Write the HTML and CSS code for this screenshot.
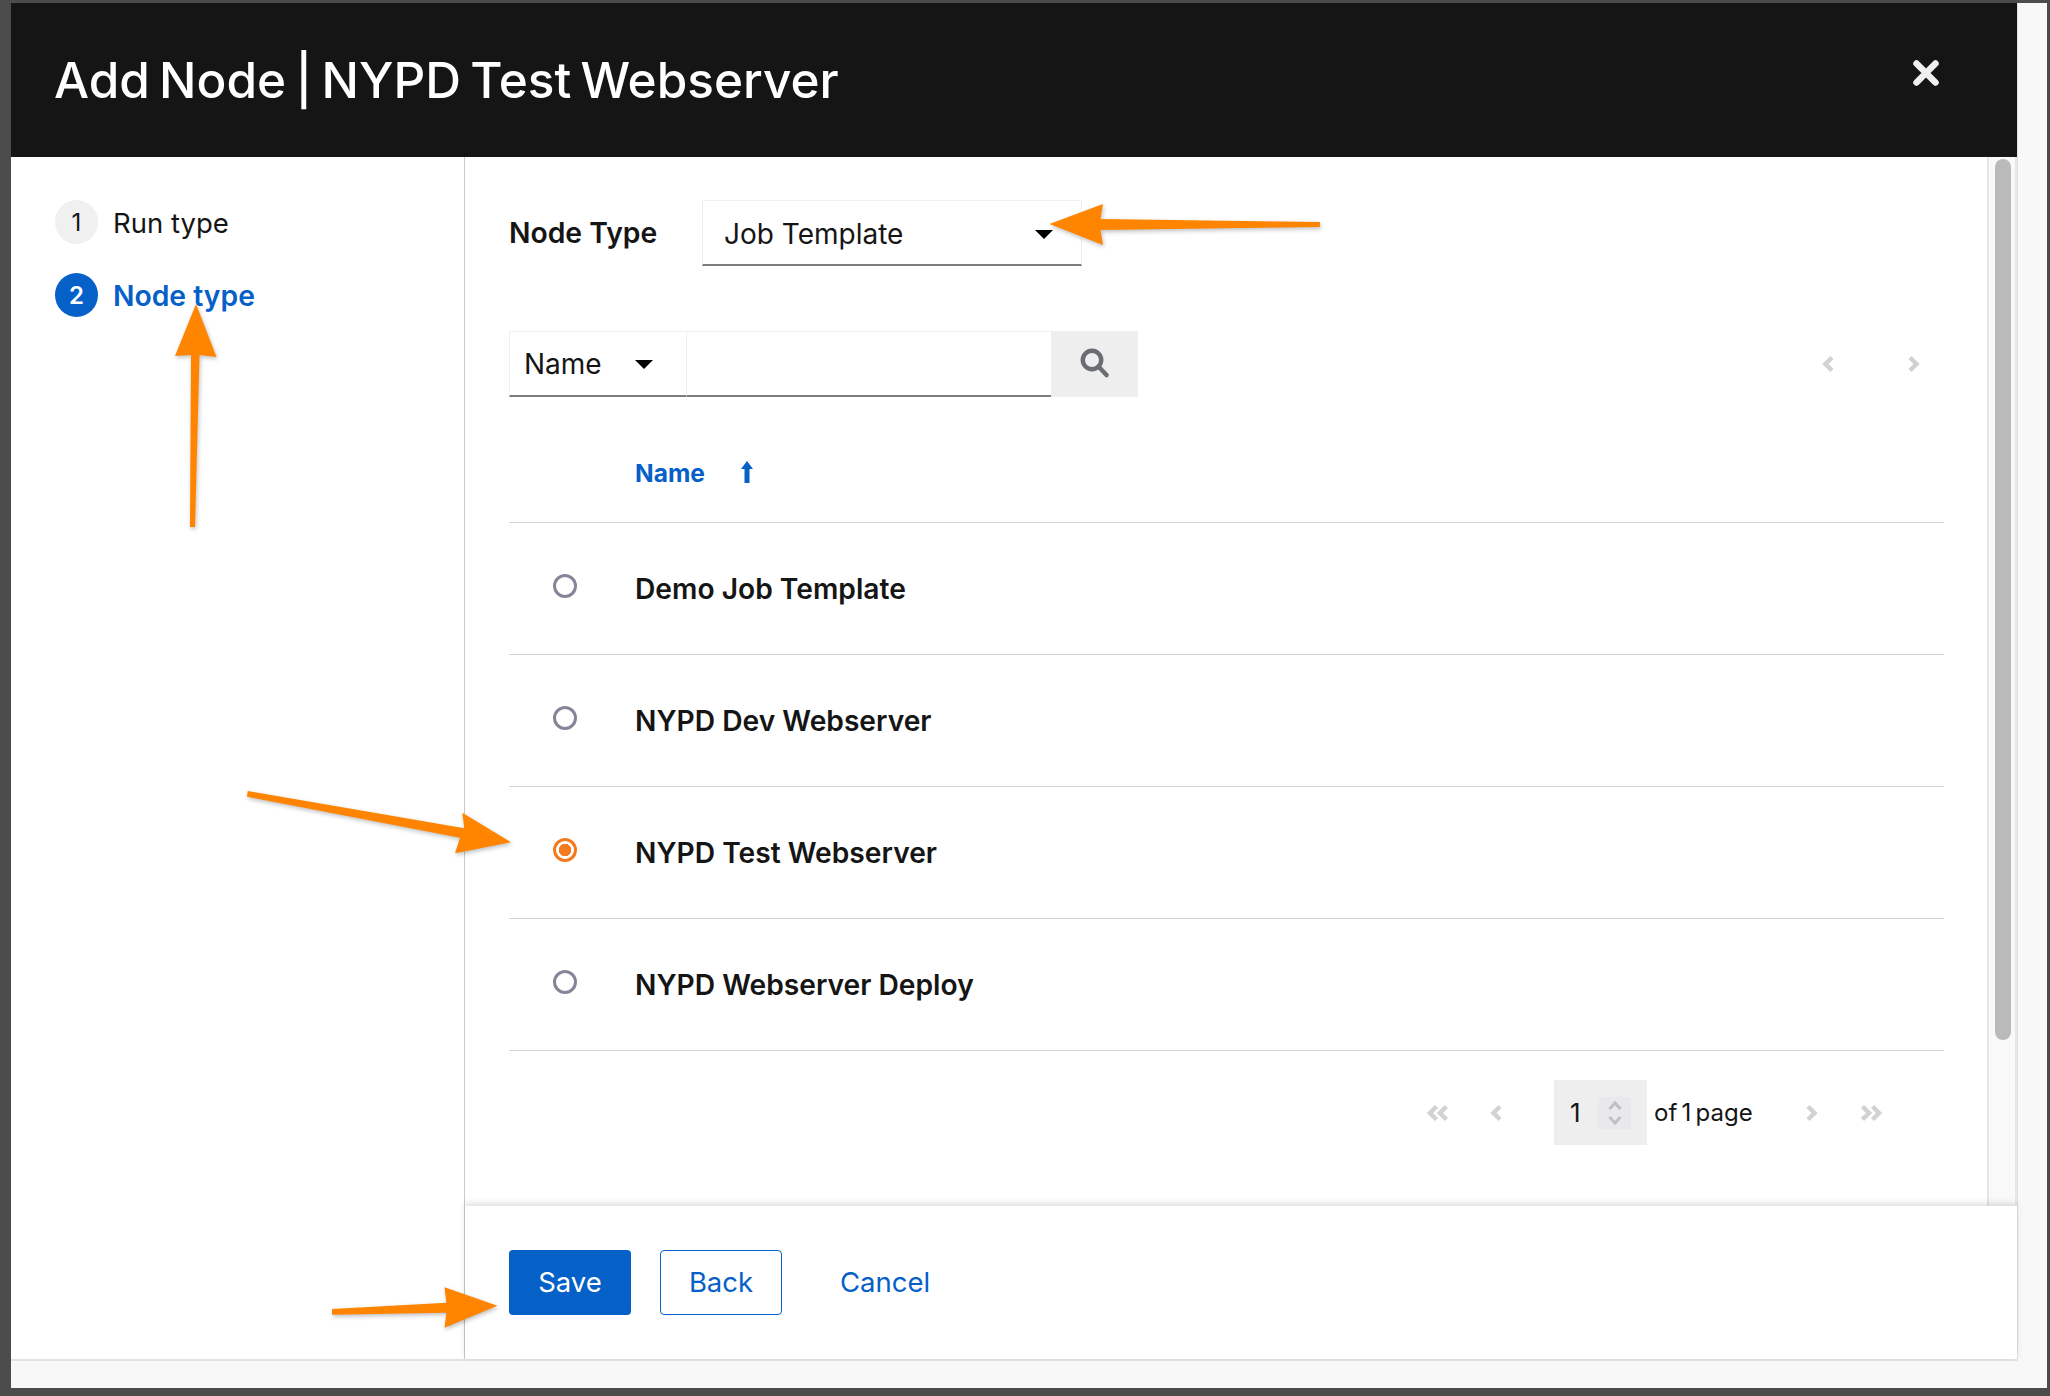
FILE: index.html
```html
<!DOCTYPE html>
<html lang="en">
<head>
<meta charset="utf-8">
<title>Add Node</title>
<link rel="stylesheet" href="styles.css">
</head>
<body>
<div class="page">
  <div class="modal">
    <header class="header">
      <h1 class="title">Add Node | NYPD Test Webserver</h1>
      <svg class="close" viewBox="0 0 26 26"><path d="M3.5 3.5 22.500 22.500M22.500 3.500 3.500 22.500"/></svg>
    </header>
    <div class="body">
      <aside class="steps">
        <div class="step"><span class="num">1</span><span class="step-label">Run type</span></div>
        <div class="step current"><span class="num">2</span><span class="step-label">Node type</span></div>
      </aside>
      <main class="main">
        <div class="scroll">
          <div class="content">
            <div class="type-row">
              <label class="type-label">Node Type</label>
              <div class="select type-select"><span>Job Template</span><i class="caret"></i></div>
            </div>
            <div class="toolbar">
              <div class="select name-select"><span>Name</span><i class="caret"></i></div>
              <div class="search-input"></div>
              <div class="search-btn">
                <svg viewBox="0 0 30 30"><circle cx="12" cy="12" r="9.200" /><path d="M18.500 18.500 26.500 27"/></svg>
              </div>
              <div class="top-pager">
                <svg class="chev" viewBox="0 0 12 18"><path d="M10 2.500 3.500 9l6.500 6.500"/></svg>
                <svg class="chev" viewBox="0 0 12 18"><path d="M2 2.500 8.500 9 2 15.500"/></svg>
              </div>
            </div>
            <div class="thead">
              <span class="th">Name</span>
              <svg class="sort" viewBox="0 0 12 22"><path d="M6 0 12 8H8.500V22H3.500V8H0Z"/></svg>
            </div>
            <div class="row"><span class="radio"></span><span class="cell">Demo Job Template</span></div>
            <div class="row"><span class="radio"></span><span class="cell">NYPD Dev Webserver</span></div>
            <div class="row"><span class="radio on"></span><span class="cell">NYPD Test Webserver</span></div>
            <div class="row"><span class="radio"></span><span class="cell">NYPD Webserver Deploy</span></div>
            <div class="pager">
              <svg class="dbl" viewBox="0 0 23 18"><path d="M10.500 2.500 4 9l6.500 6.500M20.500 2.500 14 9l6.500 6.500"/></svg>
              <svg class="chev prev" viewBox="0 0 12 18"><path d="M10 2.500 3.500 9l6.500 6.500"/></svg>
              <div class="page-input"><span class="page-num">1</span>
                <div class="spin"><svg viewBox="0 0 14 24"><path d="M1.500 8 7 2 12.500 8M1.500 16 7 22 12.500 16"/></svg></div>
              </div>
              <span class="of">of 1 page</span>
              <svg class="chev next" viewBox="0 0 12 18"><path d="M2 2.500 8.500 9 2 15.500"/></svg>
              <svg class="dbl" viewBox="0 0 23 18"><path d="M2.500 2.500 9 9l-6.500 6.500M12.500 2.500 19 9l-6.500 6.500"/></svg>
            </div>
          </div>
          <div class="track"><div class="thumb"></div></div>
        </div>
        <footer class="footer">
          <button class="btn primary">Save</button>
          <button class="btn secondary">Back</button>
          <button class="btn link">Cancel</button>
        </footer>
      </main>
    </div>
  </div>
</div>
<svg class="arrows" viewBox="0 0 2050 1396">
  <polygon points="1049.500,224 1103,204 1100.500,219 1320,222 1320,227 1100.500,230 1103,245"/>
  <polygon points="196,304 216.500,357 199.500,355 195,527 190,527 191,355 175,356"/>
  <polygon points="247.700,791 464.300,828.300 462.300,812.700 511,842.300 455,853.300 460,837.700 247,796.700"/>
  <polygon points="332,1309 446.400,1302.700 444.500,1287.300 497.400,1305.700 444.500,1327.700 446.400,1312.700 332,1314.700"/>
</svg>
</body>
</html>
```
FILE: styles.css
```css
* { box-sizing: border-box; }
html, body { margin: 0; height: 100%; }
body {
  width: 2050px;
  height: 1396px;
  padding: 3px 3px 8px 11px;
  background: #4c4c4c;
  font-family: Inter, "Liberation Sans", sans-serif;
  color: #151515;
  overflow: hidden;
  position: relative;
}
.page { height: 100%; background: #f8f8f8; }
.modal {
  width: 2007px;
  height: 1358px;
  display: flex;
  flex-direction: column;
  background: #fff;
  border-right: 1px solid #e2e2e2;
  border-bottom: 2px solid #e2e2e2;
}
.header {
  height: 154px;
  flex: none;
  background: #151515;
  display: flex;
  align-items: center;
  justify-content: space-between;
  padding: 0 78px 0 43px;
}
.title {
  margin: 0;
  color: #fff;
  font-size: 49.500px;
  font-weight: 500;
  word-spacing: -4px;
}
.close { width: 26px; height: 26px; margin-bottom: 14px; fill: none; stroke: #f0f0f0; stroke-width: 6.500; stroke-linecap: round; }
.body { flex: 1; display: flex; min-height: 0; }
.steps {
  width: 454px;
  flex: none;
  border-right: 1px solid #c9c9c9;
  padding: 43px 0 0 44px;
  font-size: 27.500px;
}
.step { display: flex; align-items: center; gap: 15px; height: 44px; margin-bottom: 29px; }
.step-label { margin-top: 2px; }
.num {
  width: 43px;
  height: 44px;
  border-radius: 50%;
  background: #f0f0f0;
  display: flex;
  align-items: center;
  justify-content: center;
  font-size: 24px;
}
.step.current { color: #0560c8; font-weight: 600; font-size: 28.300px; }
.step.current .num { background: #0560c8; color: #fff; font-size: 24px; }
.main { flex: 1; display: flex; flex-direction: column; min-width: 0; }
.scroll { height: 1049px; flex: none; display: flex; }
.content { flex: 1; padding: 43px 43px 0 44px; min-width: 0; }
.type-row { display: flex; align-items: center; height: 66px; }
.type-label { width: 193px; font-size: 28.300px; font-weight: 600; }
.select {
  height: 66px;
  display: flex;
  align-items: center;
  justify-content: space-between;
  border: 1px solid #f0f0f0;
  border-bottom: 2px solid #7a7c80;
  font-size: 28px;
}
.type-select { width: 380px; padding: 2px 28px 0 21px; }
.caret {
  width: 0;
  height: 0;
  margin-top: 2px;
  border-left: 9px solid transparent;
  border-right: 9px solid transparent;
  border-top: 9px solid #000;
}
.toolbar { display: flex; height: 66px; margin-top: 65px; align-items: stretch; }
.name-select { width: 178px; padding: 0 33px 0 14px; }
.search-input { width: 364px; border-top: 1px solid #f0f0f0; border-bottom: 2px solid #7a7c80; }
.search-btn { width: 87px; background: #eeeeee; display: flex; align-items: center; justify-content: center; }
.search-btn svg { width: 30px; height: 30px; fill: none; stroke: #6a6e73; stroke-width: 4.500; stroke-linecap: round; margin-bottom: 2px; }
.top-pager { margin-left: auto; display: flex; align-items: center; gap: 74px; padding-right: 24px; margin-bottom: 1px; }
.chev { width: 12px; height: 18px; fill: none; stroke: #d2d2d2; stroke-width: 4.500; }
.dbl { width: 23px; height: 18px; fill: none; stroke: #d2d2d2; stroke-width: 4.500; }
.thead { height: 126px; display: flex; align-items: center; padding: 27px 0 0 126px; border-bottom: 1.500px solid #d2d2d2; gap: 36px; }
.th { color: #0560c8; font-size: 24.500px; font-weight: 700; }
.sort { width: 12px; height: 22px; fill: #0560c8; margin-bottom: 2px; }
.row { height: 132px; display: flex; align-items: center; border-bottom: 1.500px solid #d2d2d2; }
.radio {
  width: 24px;
  height: 24px;
  margin: 0 58px 6px 44px;
  border-radius: 50%;
  border: 3px solid #85859a;
  flex: none;
}
.radio.on { border-color: #f47a1f; background: radial-gradient(circle, #f47a1f 0 6px, #fff 6.500px); }
.cell { font-size: 28.200px; font-weight: 600; padding-top: 1px; }
.pager { display: flex; align-items: center; height: 65px; margin-top: 29px; padding-left: 917px; }
.pager .prev { margin-left: 41px; }
.page-input {
  width: 93px;
  height: 65px;
  margin-left: 52px;
  background: #eeeeee;
  display: flex;
  align-items: center;
  padding-left: 16px;
  font-size: 26px;
}
.page-num { width: 28px; }
.spin { width: 33px; height: 32px; background: #e9e9eb; display: flex; align-items: center; justify-content: center; }
.spin svg { width: 14px; height: 24px; fill: none; stroke: #bfc0c6; stroke-width: 3; }
.of { margin-left: 7px; font-size: 24px; word-spacing: -2.500px; width: 152px; }
.pager .next { margin-right: 42px; }
.track { width: 30px; flex: none; padding: 2px 6px 0; background: #f9f9f9; border-left: 2px solid #e6e6e6; border-right: 2px solid #e6e6e6; }
.thumb { width: 16px; height: 881px; border-radius: 8px; background: #bababa; }
.footer {
  flex: 1;
  display: flex;
  align-items: center;
  gap: 29px;
  padding: 0 0 0 44px;
  background: #fff;
  box-shadow: 0 -3px 6px rgba(0,0,0,.12);
  position: relative;
}
.btn {
  width: 122px;
  height: 65px;
  margin-bottom: 1px;
  border-radius: 4px;
  border: 1.500px solid transparent;
  font: 400 27.500px Inter, "Liberation Sans", sans-serif;
  background: none;
  padding: 0;
}
.primary { background: #0560c8; color: #fff; }
.secondary { border-color: #0560c8; color: #0560c8; }
.link { color: #0560c8; margin-left: 13px; }
.arrows {
  position: absolute;
  left: 0;
  top: 0;
  width: 2050px;
  height: 1396px;
  fill: #ff8400;
  filter: drop-shadow(1px 2px 2px rgba(0,0,0,.25));
  pointer-events: none;
}
```
